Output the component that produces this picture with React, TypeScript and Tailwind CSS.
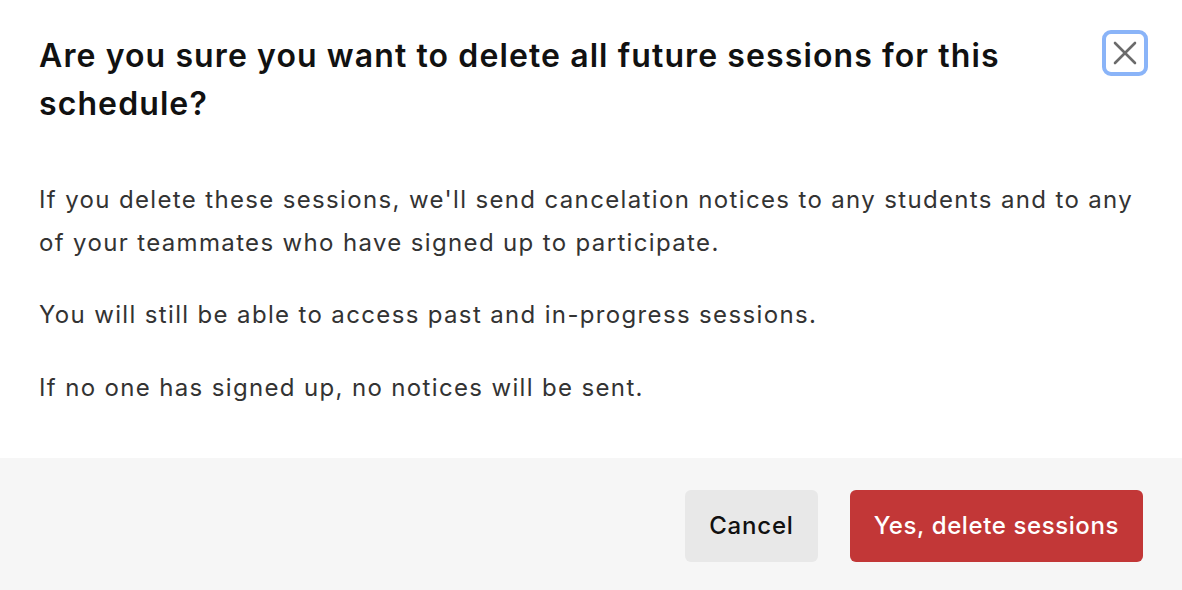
export default function App() {
  return (
    <div className="w-[1182px] h-[590px] bg-white overflow-hidden flex flex-col font-['Inter',_'Liberation_Sans',_sans-serif]">
      {/* Header + body */}
      <div className="px-[39px] pt-[32px] pb-[49px]">
        <div className="flex items-start gap-6">
          <h2 className="flex-1 text-[32px] leading-[48px] font-semibold text-[#111111] tracking-[1.1px]">
            Are you sure you want to delete all future sessions for this schedule?
          </h2>
          <button className="w-[46px] h-[46px] -mt-[2px] -mr-[5px] shrink-0 rounded-[9px] border-[4px] border-[#8ab4f8] bg-white flex items-center justify-center">
            <svg width="24" height="24" viewBox="0 0 24 24" fill="none" stroke="#6b6b6b" strokeWidth="2.6" strokeLinecap="round">
              <line x1="2" y1="2" x2="22" y2="22" />
              <line x1="22" y1="2" x2="2" y2="22" />
            </svg>
          </button>
        </div>

        <div className="mt-[50px] flex flex-col gap-[29px] text-[24px] leading-[43.2px] text-[#333333] tracking-[1.35px]">
          <p>
            If you delete these sessions, we'll send cancelation notices to any students and to any
            of your teammates who have signed up to participate.
          </p>
          <p>You will still be able to access past and in-progress sessions.</p>
          <p>If no one has signed up, no notices will be sent.</p>
        </div>
      </div>

      {/* Footer */}
      <div className="flex-1 bg-[#f6f6f6] px-[39px] pt-[32px] flex justify-end items-start gap-[32px]">
        <button className="h-[72px] px-6 rounded-[6px] bg-[#e8e8e8] text-[24px] font-medium text-[#111111] tracking-[0.8px]">
          Cancel
        </button>
        <button className="h-[72px] px-6 rounded-[6px] bg-[#c23737] text-[24px] font-medium text-white tracking-[0.6px]">
          Yes, delete sessions
        </button>
      </div>
    </div>
  );
}
